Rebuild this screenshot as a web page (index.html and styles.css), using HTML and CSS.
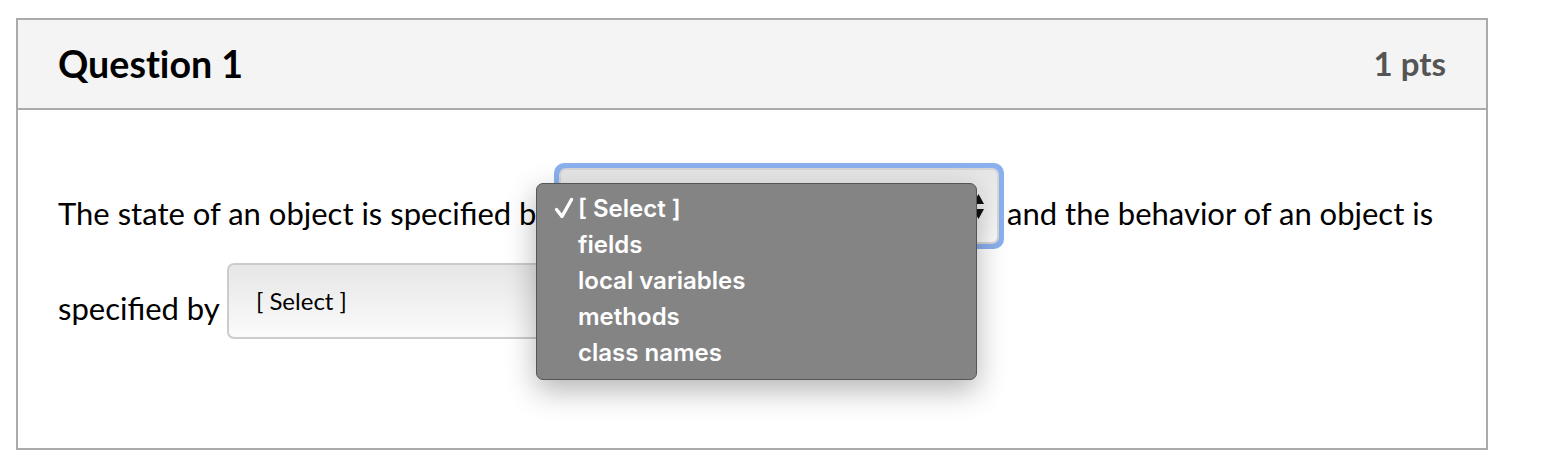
FILE: index.html
```html
<!DOCTYPE html>
<html lang="en">
<head>
<meta charset="utf-8">
<title>Question 1</title>
<link rel="stylesheet" href="styles.css">
</head>
<body>
<div class="question">
  <div class="q-header">
    <h2 class="q-title">Question 1</h2>
    <span class="q-points">1 pts</span>
  </div>
  <div class="q-body">
    <p class="q-text">The state of an object is specified by <span class="select focused"><span class="select-inner"><span class="select-value"></span><svg class="arrows" width="11" height="25" viewBox="0 0 11 25"><path d="M5.5 0 L11 10 L0 10 Z M0 15 L11 15 L5.5 25 Z" fill="#111"/></svg></span></span> and the behavior of an object is specified by <span class="select"><span class="select-inner"><span class="select-value">[ Select ]</span></span></span></p>
    <ul class="menu">
      <li class="menu-item checked"><svg class="check" width="20" height="22" viewBox="0 0 20 22"><path d="M2.5 12.5 L8 19.5 L17.5 2.5" fill="none" stroke="#fff" stroke-width="3.4" stroke-linecap="round" stroke-linejoin="round"/></svg>[ Select ]</li>
      <li class="menu-item">fields</li>
      <li class="menu-item">local variables</li>
      <li class="menu-item">methods</li>
      <li class="menu-item">class names</li>
    </ul>
  </div>
</div>
</body>
</html>
```
FILE: styles.css
```css
* { box-sizing: border-box; }
body {
  margin: 0;
  padding: 18px 0 0 16px;
  background: #fff;
  font-family: Lato, "Liberation Sans", sans-serif;
  color: #000;
}
.question {
  width: 1472px;
  height: 432px;
  border: 2px solid #aaaaaa;
  display: flex;
  flex-direction: column;
}
.q-header {
  height: 90px;
  background: #f4f4f4;
  border-bottom: 2px solid #aaaaaa;
  display: flex;
  align-items: center;
  justify-content: space-between;
  padding: 0 40px 2px 40px;
}
.q-title {
  margin: 0;
  font-size: 37.6px;
  font-weight: 700;
  color: #000;
  font-variant-ligatures: none;
}
.q-points {
  font-size: 33px;
  font-weight: 700;
  color: #555;
}
.q-body {
  position: relative;
  flex: 1;
  padding: 56px 40px 0 40px;
}
.q-text {
  margin: 0;
  font-size: 31px;
  line-height: 95px;
}
.select {
  display: inline-block;
  vertical-align: middle;
  margin-top: -11px;
  margin-bottom: 11px;
  border-radius: 10px;
  padding: 0;
  line-height: normal;
}
.select.focused {
  padding: 5px;
  margin-left: -5px;
  margin-right: -5px;
  background: #8ab0ee;
}
.select-inner {
  display: flex;
  align-items: center;
  justify-content: space-between;
  width: 440px;
  height: 76px;
  border: 2px solid #cccccc;
  border-radius: 7px;
  background: linear-gradient(#e6e6e6, #fbfbfb);
  padding: 0 14px 2px 27px;
  font-size: 24px;
}
.focused .select-inner {
  border-color: #d6d6d6;
  padding: 0 13px 0 27px;
}
.menu {
  position: absolute;
  left: 518px;
  top: 73px;
  width: 441px;
  height: 197px;
  margin: 0;
  padding: 7px 0 0 0;
  list-style: none;
  background: #848485;
  border: 1px solid #555;
  border-radius: 7px;
  box-shadow: 0 10px 30px rgba(0,0,0,0.3);
  font-family: Inter, "Noto Sans", sans-serif;
  font-weight: 600;
  font-size: 24px;
  color: #fff;
}
.menu-item {
  height: 36px;
  line-height: 36px;
  padding-left: 41px;
  position: relative;
}
.check {
  position: absolute;
  left: 17px;
  top: 6px;
}
```
